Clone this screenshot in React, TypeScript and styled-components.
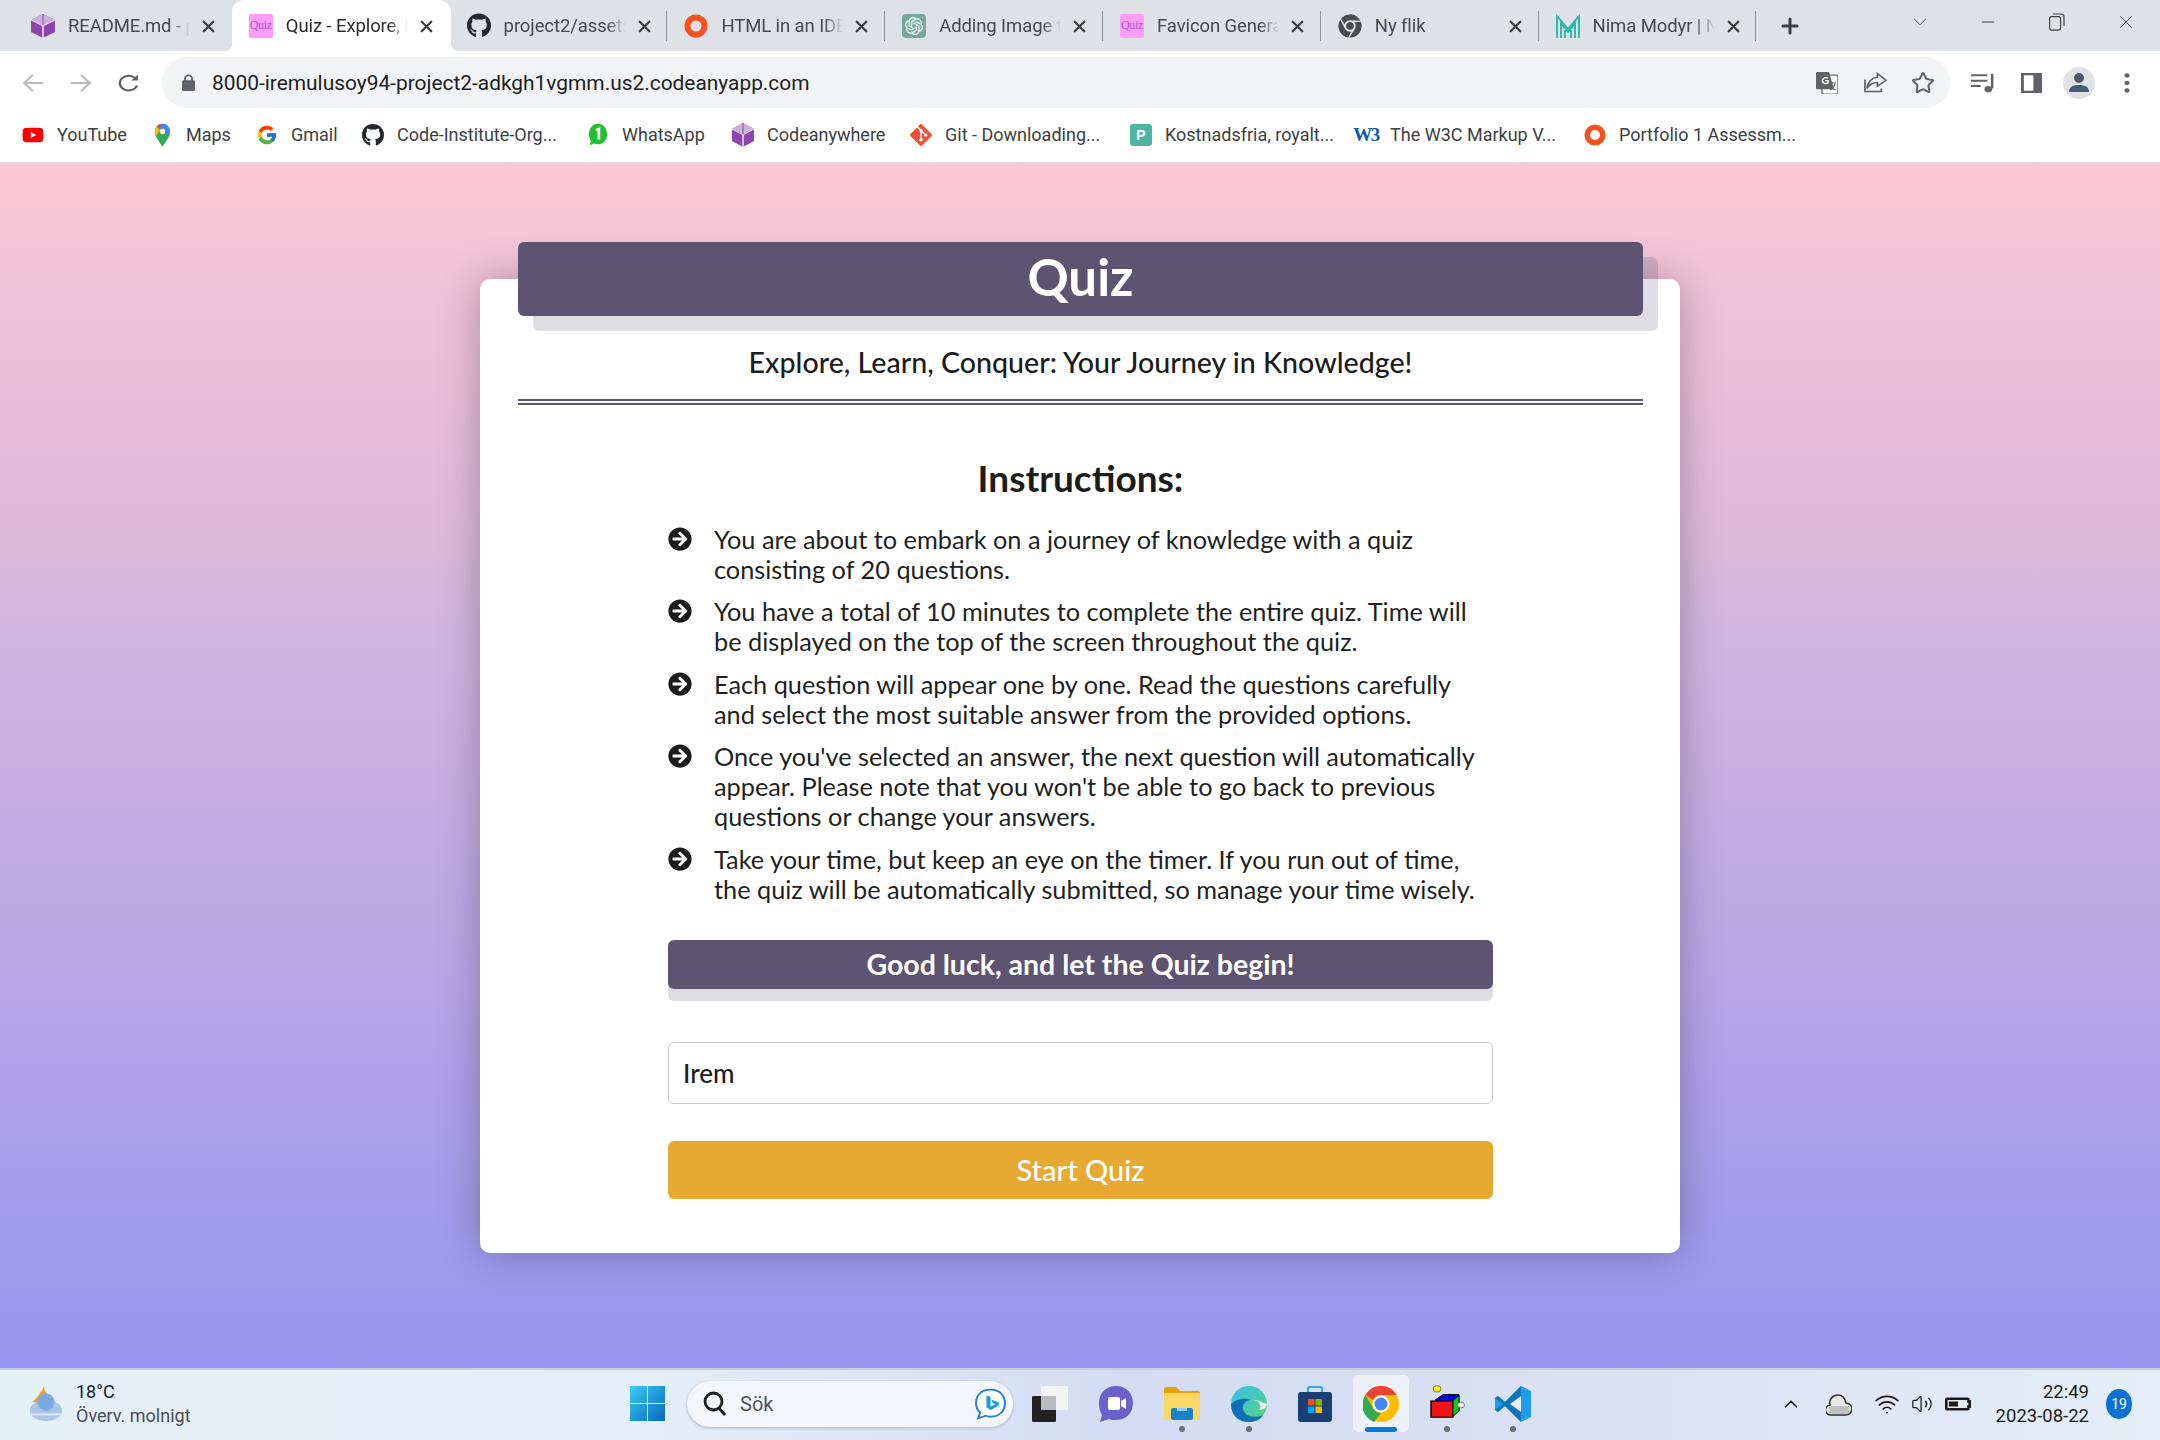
import React from "react";
import styled, { createGlobalStyle } from "styled-components";
import { FaGithub, FaArrowCircleRight, FaYoutube, FaChrome, FaBatteryHalf } from "react-icons/fa";
import { FcGoogle } from "react-icons/fc";
import { SiOpenai, SiGit } from "react-icons/si";
import { Star, ChevronUp, ChevronDown, Minus, Plus, X, Volume2, Wifi } from "lucide-react";

const Global = createGlobalStyle`
  html, body { margin: 0; padding: 0; width: 2160px; height: 1440px; overflow: hidden; }
  body { font-family: "Lato", "Noto Sans", sans-serif; }
  #root { width: 2160px; height: 1440px; }
  * { box-sizing: border-box; }
`;

const Screen = styled.div`
  width: 2160px; height: 1440px; display: flex; flex-direction: column; overflow: hidden;
`;

/* ---------- browser chrome ---------- */
const TabStrip = styled.div`
  height: 51px; background: #dee1e6; display: flex; padding-left: 14px; flex: none;
  font-family: "Roboto", "Liberation Sans", sans-serif;
`;
const TabBox = styled.div<{ $active?: boolean; $sep?: boolean }>`
  position: relative; width: 217.8px; height: 51px; flex: none; display: flex; align-items: center;
  padding-left: 17px; color: ${p => (p.$active ? "#2a2c30" : "#45484d")};
  ${p => p.$active && `
    &::before { content: ""; position: absolute; left: 0; right: -1px; top: 0; bottom: 0; background: #fff; border-radius: 12px 12px 0 0; }
    & > * { z-index: 1; }
  `}
  ${p => p.$sep && `
    &::after { content: ""; position: absolute; right: 0; top: 11px; height: 30px; width: 1px; background: #8f9297; }
  `}
`;
const Flare = styled.span<{ $right?: boolean }>`
  position: absolute; bottom: 0; width: 8px; height: 8px; ${p => (p.$right ? "right: -9px;" : "left: -8px;")}
  background: radial-gradient(circle at ${p => (p.$right ? "100% 0" : "0 0")}, transparent 8px, #fff 8.5px);
`;
const TabIcon = styled.span`
  width: 24px; height: 24px; flex: none; display: flex; align-items: center; justify-content: center; position: relative;
`;
const TabTitle = styled.span`
  position: relative; margin-left: 13px; width: 122px; font-size: 18.5px; white-space: nowrap; overflow: hidden; letter-spacing: -0.1px;
  -webkit-mask-image: linear-gradient(to right, #000 84%, transparent 100%);
  mask-image: linear-gradient(to right, #000 84%, transparent 100%);
`;
const TabClose = styled.span`
  position: absolute; left: 184.5px; top: 16px; width: 20px; height: 20px; display: flex; align-items: center; justify-content: center; color: #3c4043;
`;
const NewTab = styled.span`
  margin-left: 22px; width: 24px; display: flex; align-items: center; justify-content: center; color: #3c4043;
`;
const WindowButtons = styled.div`
  margin-left: auto; display: flex; height: 44px; align-items: center; color: #3c4043;
`;
const WinButton = styled.span<{ $w: number }>`
  width: ${p => p.$w}px; display: flex; justify-content: center;
`;
const QuizFav = styled.span`
  width: 24px; height: 24px; background: #ff9dff; border-radius: 2px; color: #a657e0; font: 12px "Liberation Serif", serif;
  display: flex; align-items: center; justify-content: center; letter-spacing: -0.3px;
`;

const Toolbar = styled.div`
  height: 57px; background: #fff; display: flex; align-items: flex-end; flex: none; position: relative;
`;
const NavButton = styled.span`
  width: 48px; height: 51px; display: flex; align-items: center; justify-content: center; flex: none;
`;
const NavGroup = styled.div`
  display: flex; padding-left: 9px; width: 162px; flex: none;
`;
const AddressBar = styled.div`
  width: 1788px; height: 51px; background: #f1f3f4; border-radius: 26px; flex: none; display: flex; align-items: center;
  padding: 0 3px 0 20px; font: 20.9px "Roboto", "Liberation Sans", sans-serif; color: #202124;
`;
const UrlText = styled.span`
  margin-left: 17px;
`;
const AddressIcons = styled.div`
  margin-left: auto; display: flex;
`;
const ToolIcon = styled.span`
  width: 48px; height: 51px; display: flex; align-items: center; justify-content: center; flex: none;
`;
const RightTools = styled.div`
  display: flex; padding-left: 9px;
`;

const Bookmarks = styled.div`
  height: 55px; background: #fff; border-bottom: 1px solid #d9dbde; display: flex; align-items: center; padding: 0 0 1px 22px; flex: none;
  font: 18px "Roboto", "Liberation Sans", sans-serif; color: #3c4043;
`;
const Bookmark = styled.div<{ $w: number }>`
  width: ${p => p.$w}px; flex: none; display: flex; align-items: center; white-space: nowrap;
`;
const BookmarkIcon = styled.span`
  width: 22px; height: 26px; margin-right: 13px; flex: none; display: flex; align-items: center; justify-content: center;
`;
const PexelsMark = styled.span`
  width: 22px; height: 22px; background: #4fb3a1; border-radius: 3px; color: #fff; font: 700 14px "Liberation Sans", sans-serif;
  display: flex; align-items: center; justify-content: center;
`;
const W3Mark = styled.span`
  color: #0d5aa7; font: 700 19px "Liberation Sans Narrow", "Liberation Serif", serif; letter-spacing: -1.5px;
`;

/* ---------- quiz page ---------- */
const Page = styled.main`
  flex: 1; min-height: 0; background: linear-gradient(to bottom, #fbc8d4 0%, #9795f0 100%); padding-top: 116px;
`;
const Card = styled.section`
  width: 1200px; height: 974px; margin: 0 auto; background: #fff; border-radius: 10px; padding: 0 37px 0 38px;
  box-shadow: 0 0 40px rgba(0, 0, 0, 0.28); display: flex; flex-direction: column; align-items: center; color: #1c1c1c;
`;
const Header = styled.header`
  width: 1125px; height: 74px; margin-top: -37px; background: #5c5470; border-radius: 6px; flex: none;
  box-shadow: 15px 15px 0 rgba(92, 84, 112, 0.2); color: #fff; text-align: center;
  font-size: 51px; font-weight: 700; line-height: 70px;
`;
const Subtitle = styled.p`
  margin: 26px 0 0; font-size: 28.6px; line-height: 40px; font-weight: 500; text-align: center; width: 100%;
`;
const Rule = styled.hr`
  width: 100%; height: 6px; margin: 17px 0 0; border: 0; border-top: 2px solid #5c5470; border-bottom: 2px solid #5c5470; flex: none;
`;
const Body = styled.div`
  width: 825px; display: flex; flex-direction: column;
`;
const Heading = styled.h2`
  margin: 51px 0 0; font-size: 37px; line-height: 44px; font-weight: 700; text-align: center; color: #1c1c1c;
`;
const List = styled.ul`
  margin: 23.5px 0 0; padding: 0; list-style: none; display: flex; flex-direction: column; gap: 12.6px;
`;
const Item = styled.li`
  display: flex; align-items: flex-start; font-size: 25.3px; line-height: 30px; color: #1f1f1f;
`;
const Bullet = styled.span`
  width: 46px; flex: none; height: 30px; display: flex; align-items: center; color: #1c1c1c;
`;
const Banner = styled.div`
  height: 49px; margin-top: 36px; background: #5c5470; border-radius: 6px; box-shadow: 0 12px 0 rgba(92, 84, 112, 0.2);
  color: #fff; font-size: 28.5px; font-weight: 700; line-height: 49px; text-align: center;
`;
const NameInput = styled.input`
  height: 62px; margin-top: 53px; border: 1px solid #c9c9c9; border-radius: 6px; padding: 0 14px; outline: none; background: #fff;
  font: 26px "Lato", sans-serif; font-weight: 500; color: #1c1c1c;
`;
const StartButton = styled.button`
  height: 58px; margin-top: 37px; background: #e6a931; border: 0; border-radius: 6px; color: #fff;
  font: 500 29px "Lato", sans-serif;
`;

/* ---------- taskbar ---------- */
const Taskbar = styled.footer`
  height: 72px; flex: none; display: flex; align-items: center; border-top: 2px solid #c6cde0; padding-bottom: 3px;
  background: linear-gradient(to right, #e4f0f8 0%, #e4eef8 30%, #d3dcf3 52%, #d8e0f2 70%, #e4eef7 100%);
  font-family: "Roboto", "Liberation Sans", sans-serif; color: #1c1c1c;
`;
const Weather = styled.div`
  width: 630px; flex: none; display: flex; align-items: center; padding-left: 28px;
`;
const WeatherText = styled.div`
  margin-left: 12px; font-size: 18px; line-height: 24px; color: #4a4d55;
`;
const WeatherTemp = styled.div`
  color: #1c1c1c;
`;
const SearchBox = styled.div`
  width: 326px; height: 46px; margin: 0 4px 0 22px; background: #f3f6fd; border-radius: 23px; box-shadow: 0 1px 2px 1px #c2c8d6;
  display: flex; align-items: center; padding: 0 6px 0 16px; font-size: 20px; color: #50535a; flex: none;
`;
const SearchLabel = styled.span`
  margin-left: 13px; flex: 1;
`;
const TaskSlot = styled.div<{ $state?: "open" | "active" }>`
  width: 66.2px; height: 57px; flex: none; position: relative; display: flex; align-items: center; justify-content: center;
  ${p => p.$state === "active" && `
    &::before { content: ""; position: absolute; left: 5px; right: 5px; top: 0; bottom: 0; background: rgba(255,255,255,.55); border-radius: 5px; }
    &::after { content: ""; position: absolute; left: 17px; right: 17px; bottom: 0; height: 5px; background: #0078d4; border-radius: 3px; }
  `}
  ${p => p.$state === "open" && `
    &::after { content: ""; position: absolute; left: 50%; margin-left: -3px; bottom: 0; width: 6px; height: 6px; background: #6d6f75; border-radius: 50%; }
  `}
  & > svg { position: relative; }
`;
const Tray = styled.div`
  margin-left: auto; display: flex; align-items: center; padding-right: 28px; color: #1c1c1c;
`;
const TrayIcon = styled.span<{ $w: number }>`
  width: ${p => p.$w}px; display: flex; justify-content: center; flex: none;
`;
const Clock = styled.div`
  margin-left: 13px; text-align: right; font-size: 18.5px; line-height: 24px;
`;
const Badge = styled.span`
  margin-left: 17px; width: 26px; height: 30px; border-radius: 50%; background: #0a72d1; color: #fff; font-size: 14px;
  display: flex; align-items: center; justify-content: center;
`;

/* ---------- drawings ---------- */
const Cube = () => (
  <svg width="24" height="24" viewBox="0 0 24 26" preserveAspectRatio="none">
    <path d="M12 0 24 6.5V19.5L12 26 0 19.5V6.5Z" fill="#8e44ad" />
    <path d="M12 0 24 6.5 12 13 0 6.5Z" fill="#cdb0dc" />
    <path d="M12 0V13" stroke="#8e44ad" strokeWidth="1" />
    <path d="M12 13V26" stroke="#fff" strokeWidth="1.4" />
    <path d="M0 6.5 12 13 24 6.5" stroke="#fff" strokeWidth=".8" fill="none" />
  </svg>
);
const Ring = () => (
  <svg width="24" height="24" viewBox="0 0 24 24"><circle cx="12" cy="12" r="8.5" fill="none" stroke="#f4511e" strokeWidth="6" /></svg>
);
const OpenAiFav = () => (
  <svg width="24" height="24" viewBox="0 0 24 24"><rect width="24" height="24" rx="4" fill="#74aa9c" /><g transform="translate(3 3)"><SiOpenai size={18} color="#fff" /></g></svg>
);
const Modyr = () => (
  <svg width="24" height="24" viewBox="0 0 24 24" fill="none" stroke="#1fb8a6" strokeWidth="1.8">
    <path d="M1 24V2L12 15 23 2V24" /><path d="M5 24V9L12 18 19 9V24" /><path d="M9 24V16" /><path d="M15 24V16" />
  </svg>
);
const MapsPin = () => (
  <svg width="17" height="24" viewBox="0 0 20 28" preserveAspectRatio="none">
    <path d="M10 28C7 22 1 17 1 10 1 5 5 1 10 1s9 4 9 9c0 7-6 12-9 18Z" fill="#34a853" />
    <path d="M3 4A9 9 0 0 1 10 1L6 6Z" fill="#ea4335" />
    <path d="M1 10A9 9 0 0 1 3 4L7 8 3 15C2 13 1 12 1 10Z" fill="#fbbc04" />
    <path d="M10 1a9 9 0 0 1 9 9L14 14 6 6Z" fill="#4285f4" />
    <circle cx="10" cy="10" r="3.2" fill="#fff" />
  </svg>
);
const WhatsAppOne = () => (
  <svg width="20" height="23" viewBox="0 0 22 28" preserveAspectRatio="none">
    <path d="M11 1C5 1 1 7 1 14c0 3 1 6 2 8l-1 5 5-2c1 .6 3 1 4 1 6 0 10-5 10-12S17 1 11 1Z" fill="#1fc12f" />
    <path d="M9 9l3-2v13" fill="none" stroke="#fff" strokeWidth="3" />
  </svg>
);
const ArrowLeft = ({ flip }: { flip?: boolean }) => (
  <svg width="22" height="18" viewBox="0 0 22 20" preserveAspectRatio="none" fill="none" stroke="#b9bbbe" strokeWidth="2.2" style={flip ? { transform: "scaleX(-1)" } : undefined}>
    <path d="M21 10H2M11 1 2 10l9 9" />
  </svg>
);
const Reload = () => (
  <svg width="22" height="20" viewBox="0 0 22 24" preserveAspectRatio="none" fill="none" stroke="#5f6368" strokeWidth="2.4">
    <path d="M19 15A8.8 8.8 0 1 1 17 6" /><path d="M20 2V9H13Z" fill="#5f6368" stroke="none" />
  </svg>
);
const Lock = () => (
  <svg width="13" height="17" viewBox="0 0 13 19" preserveAspectRatio="none">
    <path d="M3 8V5a3.5 3.5 0 0 1 7 0v3" fill="none" stroke="#5f6368" strokeWidth="1.8" /><rect y="7" width="13" height="12" rx="1.5" fill="#5f6368" />
  </svg>
);
const Translate = () => (
  <svg width="22" height="22" viewBox="0 0 22 28" preserveAspectRatio="none">
    <rect x="6" y="4" width="16" height="24" rx="1.5" fill="#fff" stroke="#6b6e72" strokeWidth="1.5" />
    <path d="M1.5 0H13L18 22H1.5A1.5 1.5 0 0 1 0 20.5V1.5A1.5 1.5 0 0 1 1.5 0Z" fill="#5f6368" />
    <path d="M12 8a3.6 3.6 0 1 0 0 6V11H9" fill="none" stroke="#fff" strokeWidth="1.5" />
    <path d="M13 14h7M16.5 13v2M19 15c-1 4-3 7-5 8M14 17c1 3 4 5 6 6" fill="none" stroke="#5f6368" strokeWidth="1.3" />
  </svg>
);
const ShareIcon = () => (
  <svg width="23" height="21" viewBox="0 0 24 28" preserveAspectRatio="none" fill="none" stroke="#5f6368" strokeWidth="1.8">
    <path d="M1 10V26H18V22" /><path d="M14 2 23 11 14 19V14C9 14 6 16 3 22 4 14 8 8 14 7Z" />
  </svg>
);
const MediaIcon = () => (
  <svg width="25" height="20" viewBox="0 0 26 26" preserveAspectRatio="none" fill="none" stroke="#5f6368" strokeWidth="2.6">
    <path d="M0 3H17M0 10H17M0 17H10" /><path d="M22 1V20" /><circle cx="18" cy="21" r="4" fill="#5f6368" stroke="none" />
  </svg>
);
const SidePanel = () => (
  <svg width="21" height="20" viewBox="0 0 22 26" preserveAspectRatio="none"><rect width="22" height="26" fill="#5f6368" /><rect x="3" y="3" width="10" height="20" fill="#fff" /></svg>
);
const Avatar = () => (
  <svg width="32" height="32" viewBox="0 0 32 32">
    <circle cx="16" cy="16" r="16" fill="#dfe1e5" /><circle cx="16" cy="11" r="5" fill="#4a5a70" /><path d="M6 25c0-6 5-7 10-7s10 1 10 7Z" fill="#4a5a70" />
  </svg>
);
const Dots = () => (
  <svg width="6" height="20" viewBox="0 0 6 24" preserveAspectRatio="none" fill="#5f6368"><circle cx="3" cy="3" r="2.6" /><circle cx="3" cy="12" r="2.6" /><circle cx="3" cy="21" r="2.6" /></svg>
);
const Restore = () => (
  <svg width="16" height="18" viewBox="0 0 16 18" fill="none" stroke="#3c4043" strokeWidth="1.2"><rect x=".6" y="3.6" width="11" height="13.5" rx="2" /><path d="M4 1h8a3 3 0 0 1 3 3v9" /></svg>
);
const WeatherIcon = () => (
  <svg width="36" height="36" viewBox="0 0 36 38">
    <path d="M16 0c-4 8-7 12-12 17 8 2 16 0 20-5C19 10 16 6 16 0Z" fill="#f39a1f" />
    <ellipse cx="18" cy="26" rx="17" ry="11" fill="#a9c5ea" /><circle cx="18" cy="17" r="9" fill="#7ba9e0" /><path d="M2 30h32" stroke="#dfe9f8" strokeWidth="2" />
  </svg>
);
const WinLogo = () => (
  <svg width="35" height="35" viewBox="0 0 35 35">
    <defs><linearGradient id="wl" x1="0" y1="0" x2="1" y2="1"><stop offset="0" stopColor="#3ccbf4" /><stop offset="1" stopColor="#0669bc" /></linearGradient></defs>
    <path d="M0 0H17V17H0ZM18 0H35V17H18ZM0 18H17V35H0ZM18 18H35V35H18Z" fill="url(#wl)" />
  </svg>
);
const SearchGlass = () => (
  <svg width="24" height="26" viewBox="0 0 24 26" fill="none" stroke="#1c1c1c" strokeWidth="2.8"><circle cx="10.5" cy="10.5" r="8.5" /><path d="M16 17l6 7" /></svg>
);
const BingIcon = () => (
  <svg width="33" height="32" viewBox="0 0 32 38" preserveAspectRatio="none">
    <path d="M16 2C7 2 2 9 2 18c0 5 2 9 4 11l-2 7 7-3c1.500.5 3 1 5 1 9 0 14-7 14-16S25 2 16 2Z" fill="#fff" stroke="#2a7de1" strokeWidth="2" />
    <path d="M12 9l4 1.500V22l5-3-3-1-1-4 7 3v4l-8 5-4-3Z" fill="#1a9ce8" />
  </svg>
);
const TaskView = () => (
  <svg width="36" height="36" viewBox="0 0 36 36"><rect x="0" y="10" width="24" height="26" fill="#222" rx="1" /><rect x="9" y="0" width="27" height="24" fill="#f2f3f5" rx="1" /><rect x="9" y="10" width="15" height="14" fill="#b9bbc0" /></svg>
);
const ChatIcon = () => (
  <svg width="34" height="36" viewBox="0 0 34 36">
    <path d="M17 0C7 0 0 7 0 17c0 5 1 9 3 12l-2 7 9-3c2 1 4 1 7 1 10 0 17-7 17-17S27 0 17 0Z" fill="#6b62c9" />
    <rect x="9" y="11" width="12" height="13" rx="2" fill="#fff" /><path d="M22 15l5-3v11l-5-3Z" fill="#fff" />
  </svg>
);
const FolderIcon = () => (
  <svg width="36" height="33" viewBox="0 0 36 33">
    <path d="M0 2a2 2 0 0 1 2-2h10l4 4h18a2 2 0 0 1 2 2v6H0Z" fill="#e3a008" />
    <rect y="6" width="36" height="27" rx="2" fill="#fdd764" /><rect x="7" y="21" width="22" height="12" rx="2" fill="#1a82c9" /><rect x="13" y="21" width="10" height="3" fill="#8fd0f5" />
  </svg>
);
const EdgeIcon = () => (
  <svg width="36" height="36" viewBox="0 0 36 36">
    <defs><linearGradient id="eg" x1="0" y1="0" x2="1" y2="1"><stop offset="0" stopColor="#35c1f1" /><stop offset="1" stopColor="#59d472" /></linearGradient></defs>
    <circle cx="18" cy="18" r="18" fill="url(#eg)" /><path d="M0 18c0 12 8 18 18 18 6 0 11-2 14-7-6 3-18 3-20-6-1-5 3-9 8-9-8-3-16 0-20 4Z" fill="#0c6fb8" />
    <path d="M20 14c4 0 8 1 9 5 1 3 0 5-3 5 8 1 10-5 10-6-3 0-9-5-16-4Z" fill="#eef3fb" />
  </svg>
);
const StoreIcon = () => (
  <svg width="34" height="36" viewBox="0 0 34 36">
    <path d="M10 6V3a2 2 0 0 1 2-2h10a2 2 0 0 1 2 2v3" fill="none" stroke="#28a8ea" strokeWidth="2" />
    <rect y="6" width="34" height="30" rx="3" fill="#1b3f72" />
    <rect x="10" y="13" width="6.500" height="6.500" fill="#f25022" /><rect x="17.500" y="13" width="6.500" height="6.500" fill="#7fba00" />
    <rect x="10" y="20.500" width="6.500" height="6.500" fill="#00a4ef" /><rect x="17.500" y="20.500" width="6.500" height="6.500" fill="#ffb900" />
  </svg>
);
const ChromeIcon = () => (
  <svg width="36" height="36" viewBox="0 0 36 36">
    <circle cx="18" cy="18" r="18" fill="#fbbc04" />
    <path d="M18 0a18 18 0 0 1 15.600 9H18a9 9 0 0 0-8 5L2.500 9A18 18 0 0 1 18 0Z" fill="#ea4335" />
    <path d="M2.500 9 10 22a9 9 0 0 0 8 5l-7 9A18 18 0 0 1 2.500 9Z" fill="#34a853" />
    <circle cx="18" cy="18" r="8.500" fill="#fff" /><circle cx="18" cy="18" r="6.500" fill="#4285f4" />
  </svg>
);
const CubeApp = () => (
  <svg width="36" height="34" viewBox="0 0 36 42" preserveAspectRatio="none" style={{ marginBottom: 6 }}>
    <path d="M6 20l8-7h16v20l-6 6Z" fill="#0000e0" stroke="#000" />
    <rect x="2" y="21" width="22" height="20" fill="#f01414" stroke="#000" strokeWidth="1.4" />
    <path d="M24 21l6-7v19l-6 7Z" fill="#16c816" stroke="#000" />
    <circle cx="8" cy="6" r="4" fill="#fff20a" stroke="#666" /><circle cx="32" cy="26" r="3.500" fill="#fff" stroke="#666" />
  </svg>
);
const VsCode = () => (
  <svg width="36" height="36" viewBox="0 0 36 36">
    <path d="M26 0 36 5V31L26 36 10 20 3 26 0 24V12L3 10 10 16Z" fill="#1f9cf0" />
    <path d="M26 0V36L10 20 3 26 0 24 8 18 0 12 3 10 10 16Z" fill="#0e75b8" />
    <path d="M26 10 15 18 26 26Z" fill="#e6eef7" />
  </svg>
);
const CloudTray = () => (
  <svg width="26" height="24" viewBox="0 0 26 24"><path d="M5 23a5 5 0 0 1-1-10 8 8 0 0 1 8-10c4 0 7 3 8 8a5.500 5.500 0 0 1 0 12Z" fill="#e8e8e8" stroke="#333" strokeWidth="1.6" /><path d="M3 14h20v8H3Z" fill="#888" fillOpacity=".4" /></svg>
);

type TabDef = { title: string; icon: React.ReactNode; active?: boolean; sep?: boolean };
const tabs: TabDef[] = [
  { title: "README.md - project2", icon: <Cube /> },
  { title: "Quiz - Explore, Learn", icon: <QuizFav>Quiz</QuizFav>, active: true },
  { title: "project2/assets/images", icon: <FaGithub size={25} color="#24292f" />, sep: true },
  { title: "HTML in an IDE and more", icon: <Ring />, sep: true },
  { title: "Adding Image to page", icon: <OpenAiFav />, sep: true },
  { title: "Favicon Generator for", icon: <QuizFav>Quiz</QuizFav>, sep: true },
  { title: "Ny flik", icon: <FaChrome size={24} color="#4a4c50" />, sep: true },
  { title: "Nima Modyr | Nima", icon: <Modyr />, sep: true },
];

const marks: { w: number; label: string; icon: React.ReactNode }[] = [
  { w: 129, label: "YouTube", icon: <FaYoutube size={24} color="#f00" /> },
  { w: 105, label: "Maps", icon: <MapsPin /> },
  { w: 106, label: "Gmail", icon: <FcGoogle size={22} /> },
  { w: 225, label: "Code-Institute-Org...", icon: <FaGithub size={24} color="#24292f" /> },
  { w: 145, label: "WhatsApp", icon: <WhatsAppOne /> },
  { w: 178, label: "Codeanywhere", icon: <Cube /> },
  { w: 220, label: "Git - Downloading...", icon: <SiGit size={24} color="#f05033" /> },
  { w: 225, label: "Kostnadsfria, royalt...", icon: <PexelsMark>P</PexelsMark> },
  { w: 229, label: "The W3C Markup V...", icon: <W3Mark>W3</W3Mark> },
  { w: 200, label: "Portfolio 1 Assessm...", icon: <Ring /> },
];

const instructions: string[] = [
  "You are about to embark on a journey of knowledge with a quiz consisting of 20 questions.",
  "You have a total of 10 minutes to complete the entire quiz. Time will be displayed on the top of the screen throughout the quiz.",
  "Each question will appear one by one. Read the questions carefully and select the most suitable answer from the provided options.",
  "Once you've selected an answer, the next question will automatically appear. Please note that you won't be able to go back to previous questions or change your answers.",
  "Take your time, but keep an eye on the timer. If you run out of time, the quiz will be automatically submitted, so manage your time wisely.",
];

export default function App() {
  return (
    <Screen>
      <Global />
      <TabStrip>
        {tabs.map(t => (
          <TabBox key={t.title} $active={t.active} $sep={t.sep}>
            {t.active && <Flare />}
            {t.active && <Flare $right />}
            <TabIcon>{t.icon}</TabIcon>
            <TabTitle>{t.title}</TabTitle>
            <TabClose><X size={19} strokeWidth={3} /></TabClose>
          </TabBox>
        ))}
        <NewTab><Plus size={24} strokeWidth={3} /></NewTab>
        <WindowButtons>
          <WinButton $w={68}><ChevronDown size={22} strokeWidth={1} /></WinButton>
          <WinButton $w={68}><Minus size={20} strokeWidth={1.2} /></WinButton>
          <WinButton $w={70}><Restore /></WinButton>
          <WinButton $w={68}><X size={22} strokeWidth={1} /></WinButton>
        </WindowButtons>
      </TabStrip>
      <Toolbar>
        <NavGroup>
          <NavButton><ArrowLeft /></NavButton>
          <NavButton><ArrowLeft flip /></NavButton>
          <NavButton><Reload /></NavButton>
        </NavGroup>
        <AddressBar>
          <Lock />
          <UrlText>8000-iremulusoy94-project2-adkgh1vgmm.us2.codeanyapp.com</UrlText>
          <AddressIcons>
            <ToolIcon><Translate /></ToolIcon>
            <ToolIcon><ShareIcon /></ToolIcon>
            <ToolIcon><Star size={24} color="#5f6368" strokeWidth={2} /></ToolIcon>
          </AddressIcons>
        </AddressBar>
        <RightTools>
          <ToolIcon><MediaIcon /></ToolIcon>
          <ToolIcon><SidePanel /></ToolIcon>
          <ToolIcon><Avatar /></ToolIcon>
          <ToolIcon><Dots /></ToolIcon>
        </RightTools>
      </Toolbar>
      <Bookmarks>
        {marks.map(m => (
          <Bookmark key={m.label} $w={m.w}>
            <BookmarkIcon>{m.icon}</BookmarkIcon>
            {m.label}
          </Bookmark>
        ))}
      </Bookmarks>

      <Page>
        <Card>
          <Header>Quiz</Header>
          <Subtitle>Explore, Learn, Conquer: Your Journey in Knowledge!</Subtitle>
          <Rule />
          <Body>
            <Heading>Instructions:</Heading>
            <List>
              {instructions.map(text => (
                <Item key={text}>
                  <Bullet><FaArrowCircleRight size={24} /></Bullet>
                  <span>{text}</span>
                </Item>
              ))}
            </List>
            <Banner>Good luck, and let the Quiz begin!</Banner>
            <NameInput defaultValue="Irem" />
            <StartButton>Start Quiz</StartButton>
          </Body>
        </Card>
      </Page>

      <Taskbar>
        <Weather>
          <WeatherIcon />
          <WeatherText>
            <WeatherTemp>18°C</WeatherTemp>
            Överv. molnigt
          </WeatherText>
        </Weather>
        <WinLogo />
        <SearchBox>
          <SearchGlass />
          <SearchLabel>Sök</SearchLabel>
          <BingIcon />
        </SearchBox>
        <TaskSlot><TaskView /></TaskSlot>
        <TaskSlot><ChatIcon /></TaskSlot>
        <TaskSlot $state="open"><FolderIcon /></TaskSlot>
        <TaskSlot $state="open"><EdgeIcon /></TaskSlot>
        <TaskSlot><StoreIcon /></TaskSlot>
        <TaskSlot $state="active"><ChromeIcon /></TaskSlot>
        <TaskSlot $state="open"><CubeApp /></TaskSlot>
        <TaskSlot $state="open"><VsCode /></TaskSlot>
        <Tray>
          <TrayIcon $w={48}><ChevronUp size={22} strokeWidth={1.8} /></TrayIcon>
          <TrayIcon $w={48}><CloudTray /></TrayIcon>
          <TrayIcon $w={48}><Wifi size={26} strokeWidth={1.6} /></TrayIcon>
          <TrayIcon $w={22}><Volume2 size={26} strokeWidth={1.4} /></TrayIcon>
          <TrayIcon $w={50}><FaBatteryHalf size={26} /></TrayIcon>
          <Clock>22:49<br />2023-08-22</Clock>
          <Badge>19</Badge>
        </Tray>
      </Taskbar>
    </Screen>
  );
}
